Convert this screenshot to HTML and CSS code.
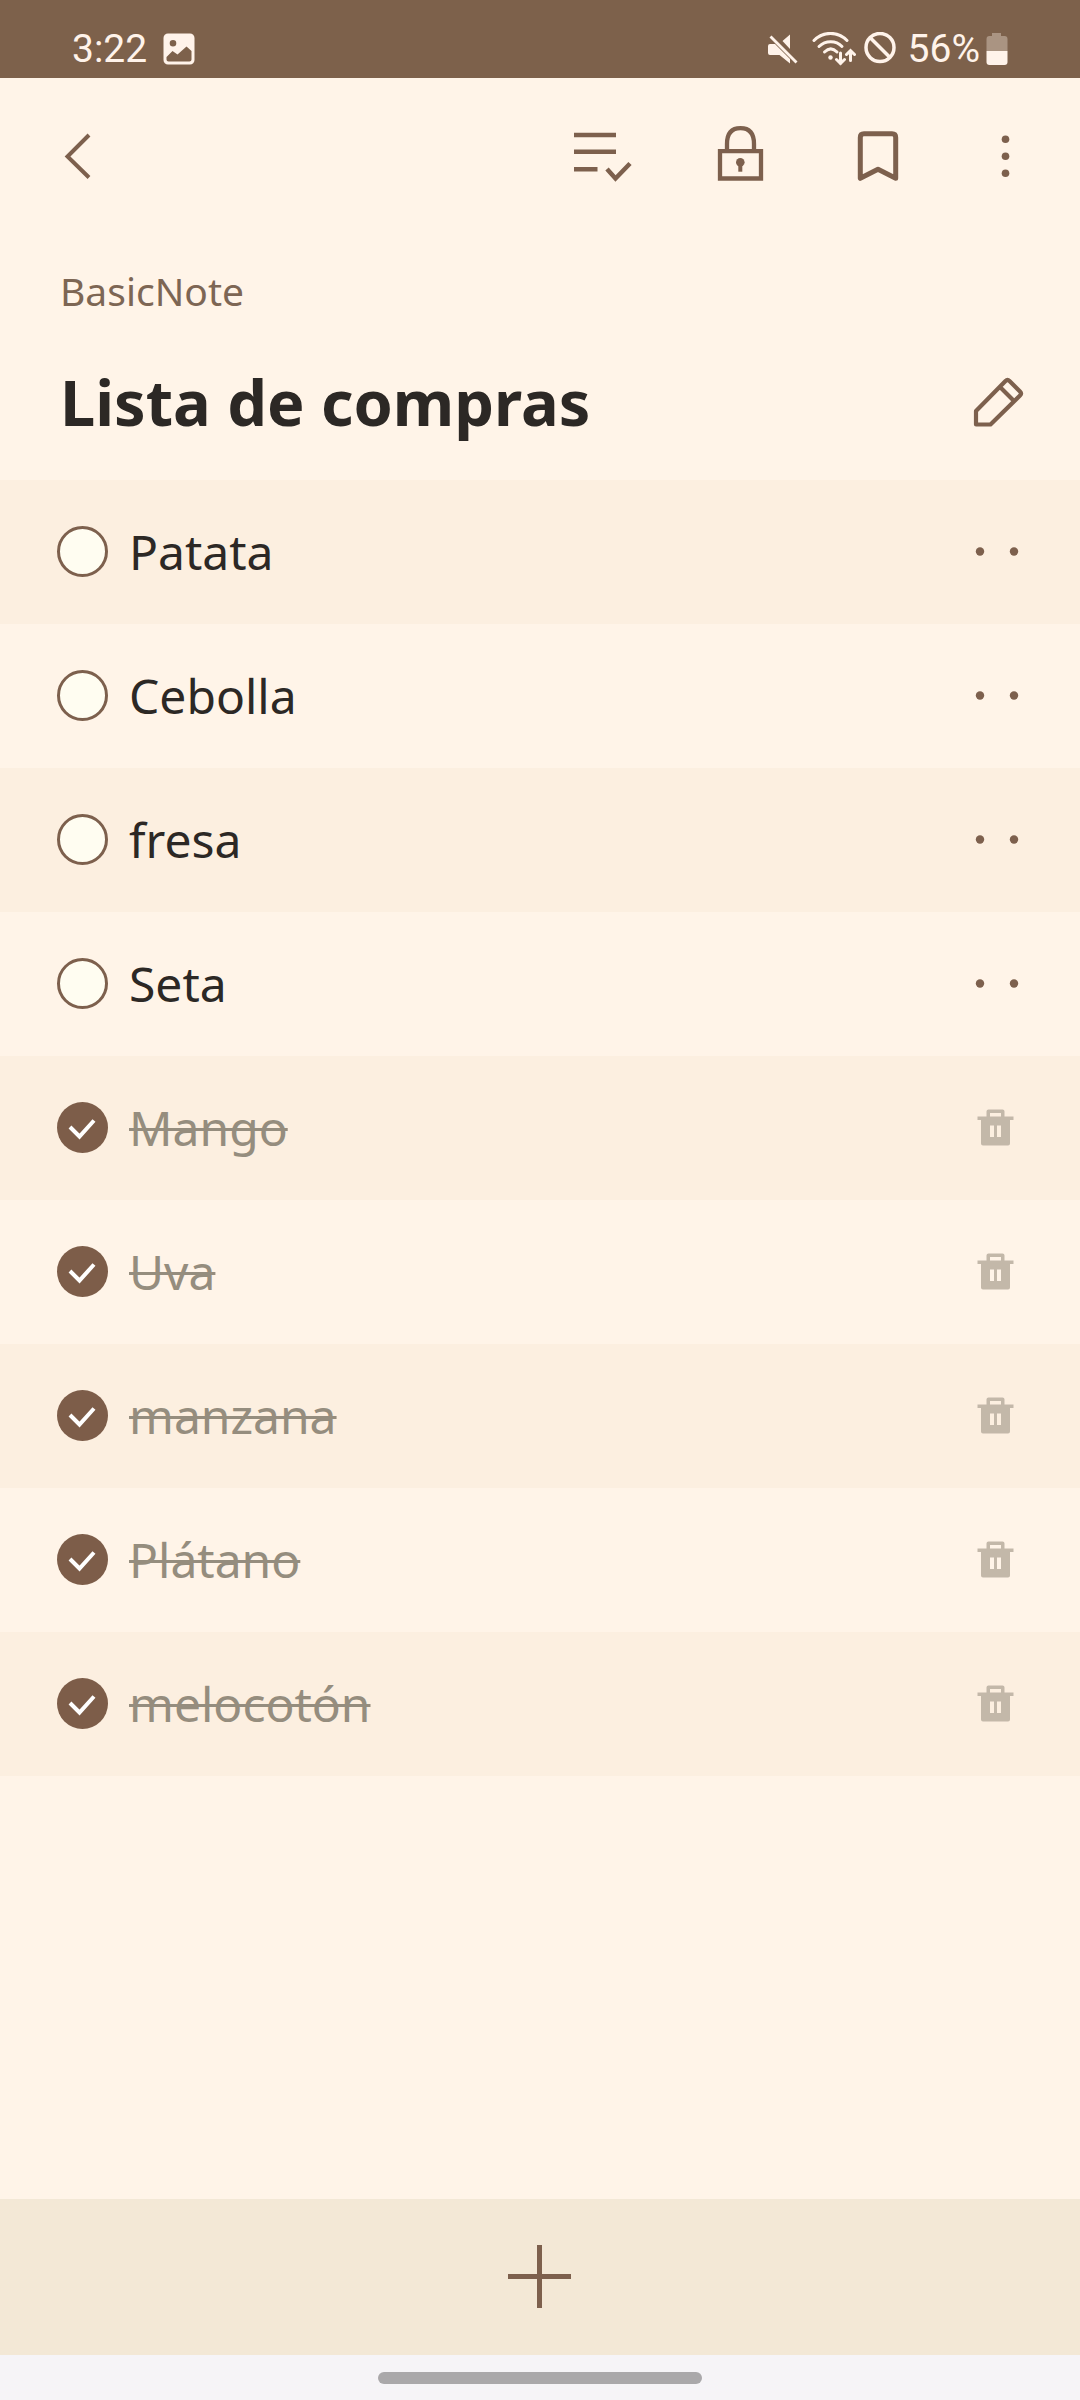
FILE: index.html
```html
<!DOCTYPE html>
<html lang="es">
<head>
  <meta charset="UTF-8">
  <meta name="viewport" content="width=device-width, initial-scale=1.0">
  <title>Lista de compras</title>
  <link rel="stylesheet" href="styles.css">
</head>
<body>
  <svg class="sprite" aria-hidden="true">
    <symbol id="handle" viewBox="0 -1 60 60">
      <circle cx="12" cy="29.5" r="4.2"/><circle cx="46" cy="29.5" r="4.2"/>
    </symbol>
    <symbol id="trash" viewBox="0 -1 60 60">
      <path fill-rule="evenodd" d="M18.5 18.5v-5q0-2 2-2h14q2 0 2 2v5h9V22h-3.500v23.500q0 2-2 2h-25q-2 0-2-2V22H9.500v-3.500zM22 18.500h11v-3.500H22zM22 27.500v11.500h4V27.500zM29 27.500v11.500h4V27.500z"/>
    </symbol>
  </svg>

  <div class="status-bar">
    <span class="clock">3:22</span>
    <svg class="icon-photo" width="32" height="32" viewBox="0 0 32 32">
      <path fill-rule="evenodd" d="M5 .5h22a4.500 4.500 0 0 1 4.500 4.500v22a4.500 4.500 0 0 1-4.500 4.500H5A4.500 4.500 0 0 1 .5 27V5A4.500 4.500 0 0 1 5 .5zM10 7a3.300 3.300 0 1 0 0 6.600A3.300 3.300 0 0 0 10 7zM3.500 24v2.500q0 2 2 2h21q2 0 2-2V18l-5-4.500-9 8-5-3.500z"/>
    </svg>
    <div class="status-right">
      <svg class="icon-mute" width="30" height="32" viewBox="0 0 30 32">
        <path d="M22 1.500V16l-7.500-8zM2 11h5l15 15v4.500L11.500 22H2q-2 0-2-2v-7q0-2 2-2z"/>
        <path class="stroke" stroke-width="2.800" d="M2.500 3.500 28.500 29.500"/>
      </svg>
      <svg class="icon-wifi" width="44" height="34" viewBox="0 0 44 34">
        <g class="stroke" stroke-width="3" stroke-linecap="round">
          <path d="M2 8.500C11-1 26-1 35 8.500"/>
          <path d="M7 14.500c6.500-6.500 17-6.500 23 0"/>
          <path d="M12.500 20c4-4 8.500-4 12.500 0"/>
          <path d="M28.500 21v10.500M24.500 27.500l4 4 4-4M38.500 28.500V18.500M34.500 22.500l4-4 4 4"/>
        </g>
        <circle cx="18.500" cy="25.500" r="2.200"/>
      </svg>
      <svg width="32" height="34" viewBox="0 0 32 34">
        <g class="stroke" stroke-width="3.500"><circle cx="16" cy="15.500" r="14"/><path d="M6 5.500l20 20"/></g>
      </svg>
      <span class="battery-level">56%</span>
      <svg width="22" height="32" viewBox="0 0 22 32">
        <path opacity=".35" d="M6 0h9v3h3.500Q21.500 3 21.500 6v12H.5V6q0-3 3-3H6z"/>
        <path d="M.5 18h21v11q0 3-3 3h-15q-3 0-3-3z"/>
      </svg>
    </div>
  </div>

  <header class="toolbar">
    <button class="tool back" type="button" aria-label="Atrás">
      <svg width="60" height="60" viewBox="0 0 60 60"><path class="stroke" stroke-width="4" d="M41 9 19.500 30.500l21.500 21"/></svg>
    </button>
    <button class="tool" type="button" aria-label="Editar lista">
      <svg width="60" height="60" viewBox="0 0 60 60"><path class="stroke" stroke-width="4.500" d="M2 9h42M2 25.700h42M2 43.200h23.500M35 43l8.500 9.500L58 37.500"/></svg>
    </button>
    <button class="tool" type="button" aria-label="Bloquear">
      <svg width="60" height="60" viewBox="0 0 60 60">
        <path class="stroke" stroke-width="4.300" d="M10 25.200h41v27.300H10zM17 25v-7C17 6 23 2.200 30.500 2.200S44 6 44 18v7"/>
        <circle cx="30.300" cy="36.300" r="4.300"/><path d="M28.300 37h4v8.700h-4z"/>
      </svg>
    </button>
    <button class="tool" type="button" aria-label="Marcar">
      <svg width="60" height="60" viewBox="0 0 60 60"><path class="stroke" stroke-width="5" stroke-linejoin="round" d="M12.300 52.300V11.500q0-3.700 3.700-3.700h28q3.700 0 3.700 3.700v40.800L30 43.300z"/></svg>
    </button>
    <button class="tool more" type="button" aria-label="Más opciones">
      <svg width="60" height="60" viewBox="0 0 60 60"><circle cx="30.500" cy="13.300" r="3.800"/><circle cx="30.500" cy="30.300" r="3.800"/><circle cx="30.500" cy="47.300" r="3.800"/></svg>
    </button>
  </header>

  <main>
    <p class="category">BasicNote</p>
    <div class="title-row">
      <h1>Lista de compras</h1>
      <button class="row-action" type="button" aria-label="Editar título">
        <svg width="60" height="60" viewBox="0 0 60 60"><path class="stroke" stroke-width="4.200" stroke-linejoin="round" d="M8 52.500V39L37.500 9q2-2 4 0L52 19.500q2 2 0 4L22.500 52.500H10q-2 0-2-2zM32 15l14 14"/></svg>
      </button>
    </div>

    <ul class="items">
      <li>
        <input type="checkbox" id="item1"><label for="item1">Patata</label>
        <button class="row-action" type="button" aria-label="Mover Patata"><svg width="60" height="60"><use href="#handle"/></svg></button>
      </li>
      <li>
        <input type="checkbox" id="item2"><label for="item2">Cebolla</label>
        <button class="row-action" type="button" aria-label="Mover Cebolla"><svg width="60" height="60"><use href="#handle"/></svg></button>
      </li>
      <li>
        <input type="checkbox" id="item3"><label for="item3">fresa</label>
        <button class="row-action" type="button" aria-label="Mover fresa"><svg width="60" height="60"><use href="#handle"/></svg></button>
      </li>
      <li>
        <input type="checkbox" id="item4"><label for="item4">Seta</label>
        <button class="row-action" type="button" aria-label="Mover Seta"><svg width="60" height="60"><use href="#handle"/></svg></button>
      </li>
      <li>
        <input type="checkbox" id="item5" checked><label for="item5">Mango</label>
        <button class="row-action delete" type="button" aria-label="Eliminar Mango"><svg width="60" height="60"><use href="#trash"/></svg></button>
      </li>
      <li>
        <input type="checkbox" id="item6" checked><label for="item6">Uva</label>
        <button class="row-action delete" type="button" aria-label="Eliminar Uva"><svg width="60" height="60"><use href="#trash"/></svg></button>
      </li>
      <li>
        <input type="checkbox" id="item7" checked><label for="item7">manzana</label>
        <button class="row-action delete" type="button" aria-label="Eliminar manzana"><svg width="60" height="60"><use href="#trash"/></svg></button>
      </li>
      <li>
        <input type="checkbox" id="item8" checked><label for="item8">Plátano</label>
        <button class="row-action delete" type="button" aria-label="Eliminar Plátano"><svg width="60" height="60"><use href="#trash"/></svg></button>
      </li>
      <li>
        <input type="checkbox" id="item9" checked><label for="item9">melocotón</label>
        <button class="row-action delete" type="button" aria-label="Eliminar melocotón"><svg width="60" height="60"><use href="#trash"/></svg></button>
      </li>
    </ul>
  </main>

  <button class="add" type="button" aria-label="Añadir elemento">
    <svg width="64" height="64" viewBox="0 0 64 64"><path class="stroke" stroke-width="5" d="M0 31.500h63M31.500 0v63"/></svg>
  </button>
  <div class="nav-bar"><div class="nav-pill"></div></div>
</body>
</html>
```
FILE: styles.css
```css
* {
  box-sizing: border-box;
}
body {
  margin: 0;
  min-height: 100vh;
  display: flex;
  flex-direction: column;
  background: #fff4e8;
  color: #2c2825;
  font-family: "Noto Sans", sans-serif;
}
svg {
  display: block;
  fill: currentColor;
  flex-shrink: 0;
}
.sprite {
  display: none;
}
.stroke {
  fill: none;
  stroke: currentColor;
}
button {
  padding: 0;
  border: none;
  background: none;
  color: #7d604d;
  cursor: pointer;
  display: flex;
  align-items: center;
  justify-content: center;
}

/* status bar */
.status-bar {
  height: 78px;
  padding: 20px 72px 0;
  display: flex;
  align-items: center;
  background: #7d614b;
  color: #fff3ea;
  font-family: Roboto, sans-serif;
  font-size: 39px;
  line-height: 58px;
}
.icon-photo {
  margin-left: 16px;
}
.status-right {
  margin-left: auto;
  display: flex;
  align-items: center;
}
.icon-mute {
  margin-right: 14px;
}
.icon-wifi {
  margin-right: 8px;
}
.battery-level {
  margin: 0 6px 0 12px;
}

/* toolbar */
.toolbar {
  height: 156px;
  padding: 0 38px 0 30px;
  display: flex;
  align-items: center;
  gap: 42px;
}
.tool {
  width: 96px;
  height: 96px;
}
.back {
  margin-right: auto;
}
.more {
  width: 74px;
}

main {
  flex: 1;
}
.category {
  margin: 0;
  padding: 31px 60px 6px;
  font-size: 39px;
  line-height: 52px;
  color: #7d6654;
}
.title-row {
  height: 157px;
  padding: 0 52px 0 60px;
  display: flex;
  align-items: center;
  justify-content: space-between;
}
h1 {
  margin: 0;
  font-size: 63px;
  font-weight: bold;
}
.row-action {
  width: 60px;
  height: 60px;
}

/* checklist */
.items {
  list-style: none;
  margin: 0;
  padding: 0;
}
.items li {
  height: 144px;
  padding: 0 52px 2px 57px;
  display: flex;
  align-items: center;
}
.items li:nth-child(odd) {
  background: #fcefe0;
}
.items input {
  appearance: none;
  width: 51px;
  height: 51px;
  margin: 0 21px 0 0;
  border: 3px solid #7d604d;
  border-radius: 50%;
  background: #fffdf1;
}
.items input:checked {
  border: none;
  background: #7d5d49 url("data:image/svg+xml,%3Csvg xmlns='http://www.w3.org/2000/svg' viewBox='0 0 51 51'%3E%3Cpath d='M13 25l9.500 9.500L37 18.500' fill='none' stroke='white' stroke-width='4'/%3E%3C/svg%3E");
}
.items label {
  font-size: 48px;
}
.items input:checked + label {
  color: #958d7e;
  text-decoration: line-through;
  text-decoration-thickness: 3px;
}
.items .row-action {
  margin-left: auto;
}
.delete {
  color: #c3b8a9;
}

/* bottom */
.add {
  width: 100%;
  height: 156px;
  background: #f3e8d6;
}
.nav-bar {
  height: 45px;
  padding-top: 17px;
  background: #f6f4f7;
}
.nav-pill {
  width: 30%;
  height: 12px;
  margin: 0 auto;
  border-radius: 6px;
  background: #aaa8aa;
}
```
